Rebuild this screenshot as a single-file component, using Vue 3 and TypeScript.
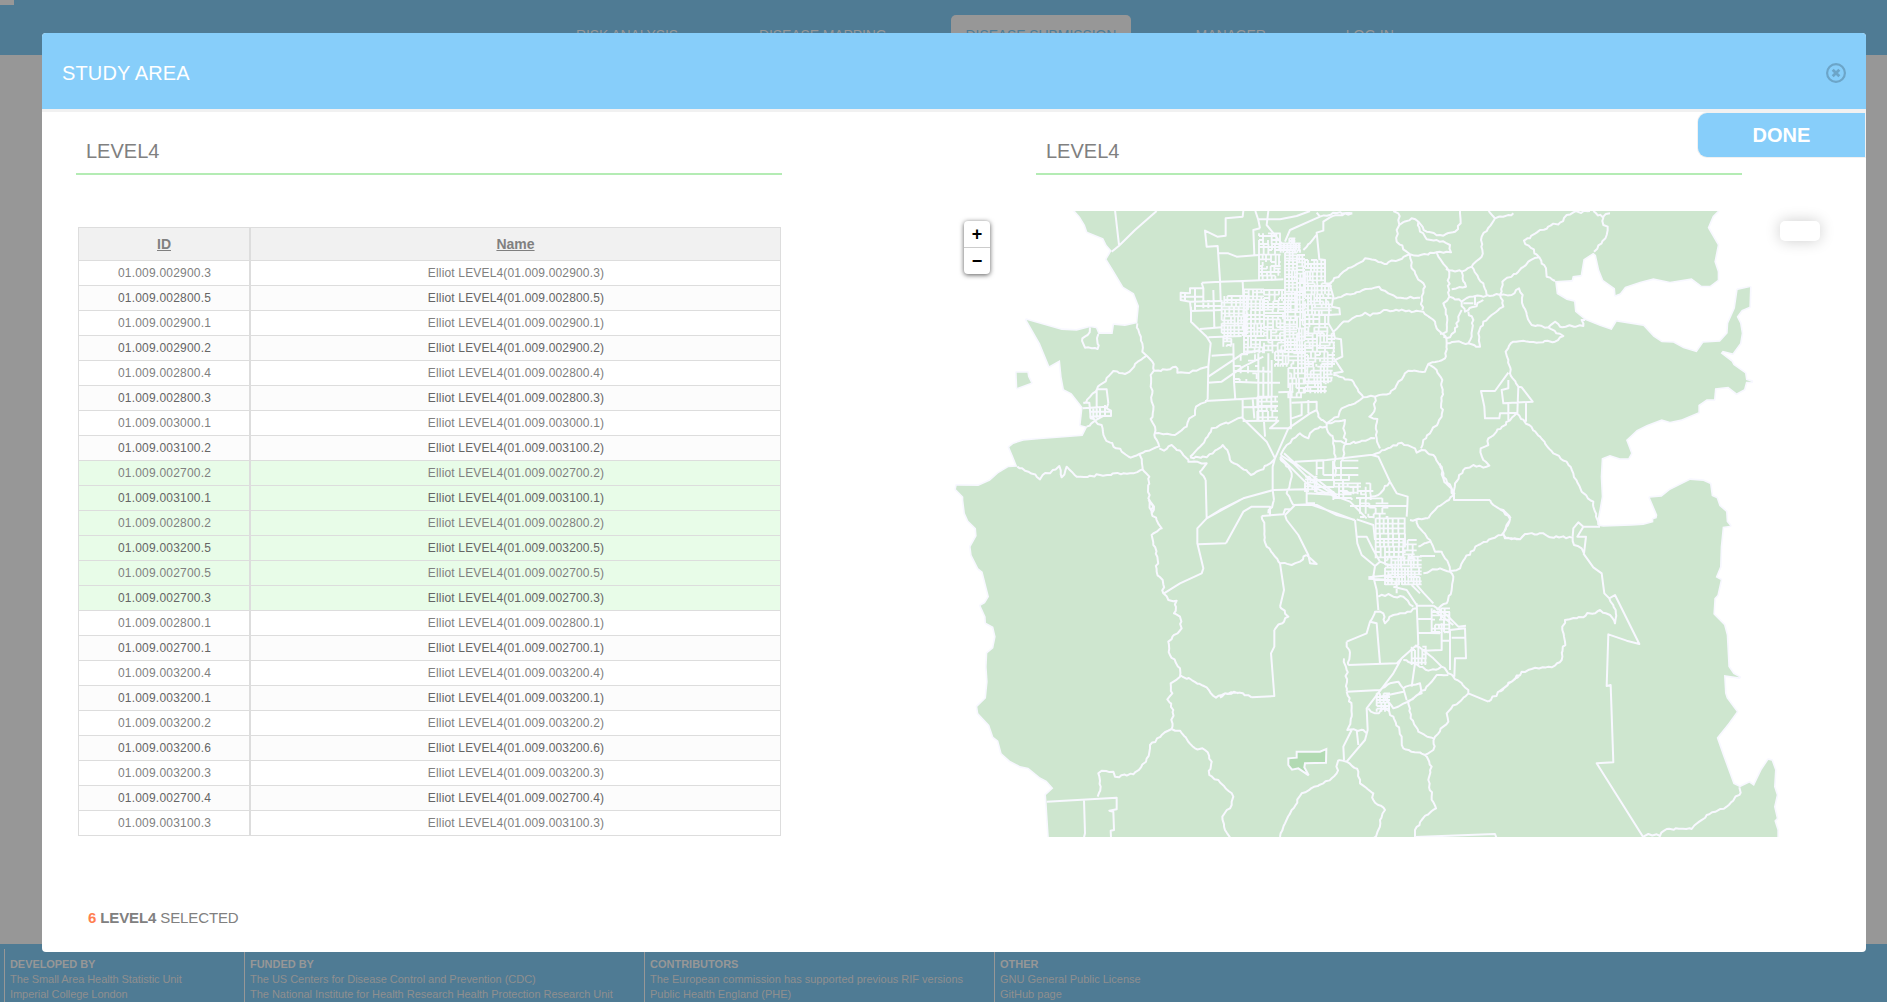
<script setup lang="ts">
interface Tab { label: string; active?: boolean; gap: number }

const tabs: Tab[] = [
  { label: 'RISK ANALYSIS', gap: 0 },
  { label: 'DISEASE MAPPING', gap: 51 },
  { label: 'DISEASE SUBMISSION', gap: 49, active: true },
  { label: 'MANAGER', gap: 50 },
  { label: 'LOG IN', gap: 50 },
]

const ids = [
  '002900.3', '002800.5', '002900.1', '002900.2', '002800.4', '002800.3', '003000.1', '003100.2',
  '002700.2', '003100.1', '002800.2', '003200.5', '002700.5', '002700.3', '002800.1', '002700.1',
  '003200.4', '003200.1', '003200.2', '003200.6', '003200.3', '002700.4', '003100.3',
]
const rows = ids.map((id, i) => ({
  id: `01.009.${id}`,
  name: `Elliot LEVEL4(01.009.${id})`,
  selected: i >= 8 && i <= 13,
}))

const credits = [
  { title: 'DEVELOPED BY', lines: ['The Small Area Health Statistic Unit', 'Imperial College London'] },
  { title: 'FUNDED BY', lines: ['The US Centers for Disease Control and Prevention (CDC)', 'The National Institute for Health Research Health Protection Research Unit'] },
  { title: 'CONTRIBUTORS', lines: ['The European commission has supported previous RIF versions', 'Public Health England (PHE)'] },
  { title: 'OTHER', lines: ['GNU General Public License', 'GitHub page'] },
]

type Pt = [number, number]

// Reproducible noise so the borders are the same at each load.
let seed = 7
function rnd(): number {
  seed = (seed * 16807) % 2147483647
  return seed / 2147483647
}

function points(dx: number, dy: number, text: string): Pt[] {
  return text.trim().split(/\s+/).map((p) => {
    const [x, y] = p.split(',').map(Number)
    return [x + dx, y + dy] as Pt
  })
}

function roughen(list: Pt[], amount: number): Pt[] {
  const out: Pt[] = [list[0]]
  for (let i = 1; i < list.length; i++) {
    const [x0, y0] = list[i - 1]
    const [x1, y1] = list[i]
    const n = Math.floor(Math.hypot(x1 - x0, y1 - y0) / 9)
    for (let k = 1; k < n; k++) {
      out.push([
        x0 + ((x1 - x0) * k) / n + (rnd() - 0.5) * amount,
        y0 + ((y1 - y0) * k) / n + (rnd() - 0.5) * amount,
      ])
    }
    out.push([x1, y1])
  }
  return out
}

function toPath(list: Pt[]): string {
  return 'M' + list.map(([x, y]) => `${x.toFixed(1)} ${y.toFixed(1)}`).join('L')
}

// Lines are separated by "|"; a leading "=" marks a surveyed, straight border.
function borders(dx: number, dy: number, text: string): string {
  return text.split('|').map((s) => {
    const t = s.trim()
    return t.startsWith('=')
      ? toPath(points(dx, dy, t.slice(1)))
      : toPath(roughen(points(dx, dy, t), 7))
  }).join('')
}

function ticks(from: number, to: number, step: number): number[] {
  const out: number[] = []
  for (let v = from; v < to - 1; v += step * (0.7 + rnd() * 0.6)) out.push(Math.round(v))
  out.push(to)
  return out
}

// City blocks: an uneven street net with some of its edges left out.
function blocks(x0: number, y0: number, x1: number, y1: number, sx: number, sy: number, density: number): string {
  const ys = ticks(y0, y1, sy)
  let d = ''
  for (let j = 0; j < ys.length - 1; j += 3) {
    const xs = ticks(x0, x1, sx)
    for (let k = j; k < Math.min(j + 3, ys.length - 1); k++) {
      for (let i = 0; i < xs.length - 1; i++) {
        if (rnd() < density) d += `M${xs[i]} ${ys[k]}H${xs[i + 1]}`
        if (rnd() < density) d += `M${xs[i]} ${ys[k]}V${ys[k + 1]}`
      }
    }
  }
  return d
}

const outline = toPath([
  ...points(0, 0, `405,33 420,50 435,75 442,95 490,115 500,135 515,152 500,178 520,210 550,260 582,280 597,318 592,370
    555,378 522,375 518,402 475,402 468,385 450,382 410,392 365,390 260,360 300,430 328,498 360,480 365,530 372,568
    395,580 428,622 422,675 442,680 428,708 380,712 300,718 250,722 220,732 208,742 220,770 232,800 205,802 175,820
    150,842 115,858 50,857 48,868 70,890`),
  ...points(0, 900, `70,0 75,40 85,62 108,85 110,108 92,140 95,165 115,205 128,215 147,290 135,310 122,317 137,350
    138,368 160,380 167,410 160,445 142,460 140,500 143,545 138,595 112,620 115,640 148,675 160,710 175,722 185,760
    210,782 240,798 265,803 300,832 320,842 340,865 318,885 320,910 327,1020`),
  ...points(1680, 810, `832,1110 832,1080 823,1052 830,1045 822,1010 830,975 822,950 825,900 815,872 805,870 785,900
    768,935 762,948 748,938 720,952 700,942 670,860 650,803 685,760 710,725 680,685 675,670 672,615 718,622 700,612
    685,590 680,495 672,465 640,433 643,385 652,375 662,330 647,322 660,290 662,230 668,170 690,167 680,155 678,125
    658,108 650,85 635,78 630,42 610,33 570,30 540,45 510,60 485,80 450,83 472,135 470,145 460,148 460,157 430,165
    395,167 310,170 295,168 292,150 298,120 305,80`),
  ...points(1500, 0, `482,830 485,775 510,765 540,775 565,775 573,760 558,720 590,690 620,675 665,658 690,665 725,658
    775,637 775,615 800,598 822,598 825,565 865,560 890,580 912,568 918,545 935,545 918,540 915,520 880,495 875,485
    842,460 848,452 878,460 900,430 905,400 900,370 890,350 905,330 928,320 930,262 893,270 885,325 865,370 863,400
    840,425 790,428 770,457 730,445 700,428 665,427 640,410 610,378 530,365 515,390 480,378 435,360 405,335 402,305
    380,300 350,282 345,243 395,240 398,228 422,225 430,178 460,158 468,165 478,210 490,240 525,265 527,285 540,280
    555,260 600,245 640,235 690,245 755,235 785,257 810,257 833,240 833,215 823,185 833,135 803,83 818,48 833,33 838,25`),
  ...points(0, 0, '400,25'),
]) + 'Z'

const island = toPath(points(0, 0, '230,518 262,518 264,530 273,548 232,563')) + 'Z'
const picked = toPath(points(840, 690, '230,965 300,965 319,957 318,998 255,1000 253,1012 266,1036 235,1015 216,1019 205,1005 205,985 230,983')) + 'Z'

const regionBorders = [
  borders(0, 0, `=525,30 537,135|=650,33 585,90 537,137 515,155
    |592,370 598,400 607,430 607,455 620,467 637,485 642,512 632,525 632,560 637,580 635,605 640,630 632,657 645,680 643,705 655,730 658,742
    |642,512 690,508 707,500 712,518 735,518 770,512 803,500
    |620,467 605,478 585,492 575,508 555,522 520,513 470,570 430,610
    |=430,608 448,608 452,655 465,658|=470,568 500,568 505,610|=470,568 470,655|=428,625 500,620|=505,610 500,625 513,632 513,648 490,648 465,662
    |=480,620 480,650|=495,615 495,645|=448,635 513,635|=460,620 460,655|=448,650 490,648
    |450,382 443,405 427,415 435,443 473,447 475,402
    |440,680 465,662 485,675 495,715 545,755 572,773 598,762 655,740
    |658,745 672,752 695,735 745,778
    |645,700 670,703 705,705 740,680 748,655 765,645 768,620 803,598
    |=803,598 805,500 812,430 800,410 753,365 753,320
    |598,762 608,808 628,830 625,895 640,920 635,940 627,900
    |232,800 265,815 300,838 308,825 330,820 358,798 365,832 380,800 410,830 480,825 550,820 580,820 608,808
    |745,778 745,785 800,790 780,815 797,840|=797,840 800,955
    |750,772 800,772 848,735 862,750 870,780 900,800
    |750,770 785,735 815,685 840,675 875,665 908,652`),
  borders(660, 0, `=250,33 248,50 197,55 197,107 172,110 135,92 140,140 173,138 180,240 182,300
    |=173,160 205,160 230,170 297,165|=125,248 180,245 248,243 370,238
    |=125,248 130,265 90,265 90,280 62,278 62,300 90,305 93,335|=90,333 185,330|=160,270 163,382|=120,387 185,382|=145,412 245,408
    |=62,290 130,290|=75,278 75,303|=105,265 105,330|=130,265 130,325|=90,305 185,303|=105,318 185,318|=145,300 145,325|=248,243 250,290
    |=155,467 220,463|=145,530 245,463 300,450|=143,548 185,545 250,500 310,470|=135,603 245,597 335,592|=220,430 222,545 226,600
    |=248,600 248,655 320,725 345,775|=312,665 315,710|=248,663 355,662 330,685 395,685|=222,512 335,515|=222,545 300,548 360,548|=248,622 350,620
    |=295,460 295,660|=310,500 310,590|=325,460 325,590|=335,480 335,590|=278,595 283,655
    |240,800 273,825 310,808 345,775|=345,775 385,685 450,640 470,630 470,605 395,608|=390,550 393,685|=395,655 425,645 425,610|=355,577 400,575|=445,600 445,640
    |=286,33 295,60 300,85|=325,33 320,75 365,130|=295,58 360,58 410,48 450,33|=375,125 390,90 480,50 470,38
    |480,50 520,38 577,40|510,52 577,40|=510,52 490,65 490,92 470,98 478,178 495,180 495,250|470,105 430,150|=300,85 280,90 283,165
    |510,250 550,215 615,175 680,192 750,163 775,167 830,157|515,297 600,275 657,260 685,280 710,293 780,293
    |520,395 545,370 615,338 630,347 680,330 790,335 825,365 830,385 858,410
    |750,163 755,205 795,260 785,290 787,330|700,33 715,40 718,75 710,90 710,125 740,155 750,163
    |718,75 755,55 775,65 800,95 850,107 885,95 902,70 900,33|775,65 780,95 800,118 830,120 870,135 873,157 830,157 835,170 865,210
    |858,410 860,430 855,475 805,492 795,515 745,512 715,545 690,580 645,590 610,592 575,540 520,525
    |805,492 830,510 847,540 845,650 810,700 790,720 783,745|645,590 645,625 628,650 652,657 650,715 660,745
    |610,592 600,600 545,625 535,650 500,670 475,650 470,630|500,670 555,660 550,685 557,730 548,780
    |500,680 480,680 450,700 445,715 420,700 380,735 362,765|500,670 500,685 520,720 525,780 525,830|520,720 560,732 645,715
    |=405,785 500,780 630,765|630,765 725,728 765,745 770,758 785,750 820,765 845,800 850,835 882,885
    |=635,765 655,770 690,845 710,880 743,890 742,918 740,950|690,845 655,885 630,890
    |=362,765 400,790 440,830 530,890 570,905 620,955|=360,770 385,795 440,850 500,880 540,895|=372,760 400,785 480,845 530,885
    |=345,775 338,800 338,870 342,900|342,900 325,940|=140,955 180,930 250,895 340,870 440,868 440,880 530,885
    |=520,395 525,415 543,418 547,470 525,480 548,515 520,520|=515,320 538,325 540,343 505,345|=495,250 510,255 520,290 515,320|=520,395 505,370 505,345
    |360,775 375,790 395,820 390,850 380,880 400,915|=400,915 450,913 530,940 582,960|=440,868 440,910 465,910|=570,918 740,918
    |882,885 860,903 825,930 805,955`),
  borders(1500, 0, `145,30 165,55 220,40|165,55 125,110 125,170 95,200 65,215 20,208 25,210
    |95,200 130,250 140,285 180,285 190,320 155,345 130,365 115,400 120,440 85,430 45,425 18,430
    |25,210 28,290 65,305 90,290 140,287|65,215 78,260 35,268|28,290 10,310 22,360 20,395 0,402|65,330 55,350 45,395 30,412 10,410|85,335 100,360 95,410 85,430
    |65,305 75,335 130,300|=70,310 100,310|=105,290 105,315|180,285 185,275 187,245 235,215 265,185 298,172 318,205 320,230 345,243
    |298,172 252,122 300,90 360,68 380,45 400,37 450,33|460,33 490,53 490,75 503,80 500,105 485,130 462,155|490,50 510,40
    |180,285 215,285 237,265 248,285 250,320 275,375 325,382 370,408 345,425 220,425 197,455 205,480 210,520 235,560
    |325,382 345,365 360,380 430,378 425,360 435,360
    |=205,518 165,573 123,573 133,620 135,655 178,655 180,640 230,638|=205,540 205,565 185,570 190,610 278,605 245,562 235,560 232,640|=258,610 258,665|=205,612 205,660
    |230,640 145,715 145,735 122,745 130,780 148,797 130,803 100,795 75,805 45,850 42,882|230,640 300,710 340,760 380,785 400,820 425,875 460,905 468,950 475,975
    |=42,882 42,900 150,900|150,900 160,915 190,930 212,955|45,882 10,830 0,790`),
  borders(0, 900, `625,0 642,20 635,40 665,85 635,105 640,135 652,170 650,215 668,240 670,280 685,300 710,302 702,340 720,350 725,385 685,425 690,465 720,505 720,530 692,550 697,580 682,598 700,630 695,687
    |=672,280 720,250 785,220 790,205 772,130 772,85 800,55|=800,55 900,0|=775,133 858,130
    |720,525 800,562 828,593 855,580 900,577|695,687 665,705 630,735 618,785 580,823 525,830 520,815 485,812 475,820 482,860 473,890
    |695,687 720,692 765,745 795,750 815,785 808,825 835,840 880,890 875,915 847,950 855,990 870,1012|=320,905 530,893 530,928 508,932 520,935 522,990 512,992 513,1012|=432,900 435,1000 432,1012`),
  borders(840, 690, `=18,340 70,245 95,230 150,230 150,257|=125,258 190,253 195,238 212,238|=195,255 225,225 290,225 350,255 405,270
    |125,258 133,290 133,330 140,350 180,400|180,400 215,405 240,395 260,375|=260,375 290,402 270,400 265,375 235,315 200,270 195,255
    |=180,400 192,480 180,530|180,530 205,560 163,600|=163,600 163,650 153,670 163,798 95,802|95,802 60,788 15,790 0,803
    |=405,270 412,340 425,375 465,408 460,440 470,480 475,540|=410,320 440,320 460,360 480,395 520,410|=410,268 460,285 465,330
    |=445,442 515,435|=445,446 520,450|=480,395 465,408|475,500 505,492 520,500 550,500 580,530
    |450,575 465,545 490,550 495,580 520,555 555,550 590,535|=380,635 440,610 450,575 470,580 480,700
    |380,635 380,650 388,660 385,705|=385,705 530,700 550,680|372,685 380,720 380,785|=380,785 480,780|380,785 395,830 395,860 382,900 430,900 440,910
    |=590,645 545,685 520,730 440,835 443,900 435,930 380,995|=590,520 595,645|=590,527 640,527|=595,567 635,567|=595,608 660,610|=665,580 665,660 610,662|=665,632 690,632|=690,600 690,720
    |=640,527 680,555 715,590 738,587|=690,600 735,595 738,685 705,685 703,740|=695,623 735,623|=640,540 700,585
    |550,690 585,700 625,722 665,710 700,740 745,780 745,790|=590,645 640,685 665,710|=745,790 805,815|805,815 850,775 875,755 900,735
    |685,735 650,735 615,780 565,815 520,835 495,800|=585,700 575,770|480,780 510,760 535,755 550,775 600,760 605,790 560,815|=550,775 560,810|=480,800 550,785
    |745,790 680,850 685,875 645,920 640,960 615,975 550,955 545,920 520,860 490,830|565,815 572,865 595,905 640,925|445,835 465,850 500,835
    |=395,900 370,950 372,990|=410,900 415,945|355,990 350,1030 310,1060 245,1090 215,1140 195,1180 180,1221
    |355,990 380,995 415,1025 420,1060 460,1090 460,1110 495,1140 480,1170 475,1200 460,1225|615,975 635,1010 625,1050 635,1100 648,1135 605,1170 585,1200 585,1225|=585,1221 825,1212 830,1225
    |625,265 605,268 570,270|590,265 595,290 630,330 645,365 665,365 685,400 690,425 700,440 695,480 680,520 650,540|690,422 720,415 735,385 775,345 845,315 870,270|850,315 860,325 900,328
    |595,350 630,335|=600,378 645,378|610,430 660,415 690,425|=520,470 560,480 590,525|=590,465 612,490 640,520|=530,445 530,490|=575,465 600,490`),
  borders(1680, 810, `0,118 30,147 10,190|10,190 15,205 60,208 75,192 130,190 150,202 215,203|=218,200 220,175 235,157 250,170 300,170|=250,170 232,200 258,200 252,250|252,250 245,235 222,225 218,200
    |=250,250 280,292 305,310 313,370 328,385 345,375 418,522 380,512 325,493 320,648 332,645 340,877 290,880 430,1102
    |328,385 347,420 345,460 330,435 300,420 230,445 195,450 187,480 195,515 185,570 155,592 95,597 65,605 35,635 0,665
    |430,1100 445,1092 480,1098 500,1077 575,1077 620,1035 680,1010 722,968 718,952`),
].join('')

const cityBlocks = [
  blocks(957, 100, 1022, 240, 13, 11, 0.8),
  blocks(1022, 130, 1082, 158, 8, 7, 0.95),
  blocks(1048, 115, 1066, 130, 9, 8, 0.9),
  blocks(1035, 158, 1071, 460, 11, 10, 0.94),
  blocks(1045, 460, 1095, 595, 12, 13, 0.88),
  blocks(1071, 165, 1095, 460, 8, 12, 0.92),
  blocks(1095, 180, 1155, 250, 10, 11, 0.9),
  blocks(1095, 250, 1175, 345, 10, 11, 0.88),
  blocks(1095, 345, 1165, 400, 14, 13, 0.8),
  blocks(1095, 400, 1185, 500, 12, 10, 0.86),
  blocks(1095, 500, 1178, 550, 10, 11, 0.86),
  blocks(1095, 550, 1160, 580, 11, 11, 0.85),
  blocks(845, 288, 925, 408, 11, 10, 0.9),
  blocks(850, 408, 875, 440, 10, 10, 0.95),
  blocks(912, 268, 972, 460, 11, 12, 0.9),
  blocks(972, 270, 1035, 460, 13, 11, 0.84),
  blocks(1005, 455, 1045, 500, 10, 10, 0.85),
  blocks(882, 463, 955, 545, 17, 20, 0.4),
  blocks(952, 590, 1014, 660, 14, 16, 0.85),
  blocks(1095, 830, 1132, 876, 10, 9, 0.8),
  blocks(1130, 782, 1255, 880, 24, 20, 0.68),
  blocks(1180, 850, 1300, 900, 14, 12, 0.7),
  blocks(1260, 895, 1345, 955, 16, 14, 0.5),
  blocks(1307, 955, 1397, 1075, 15, 13, 0.97),
  blocks(1335, 1070, 1445, 1155, 10, 10, 0.92),
  blocks(1390, 1020, 1430, 1080, 12, 14, 0.75),
  blocks(1475, 1225, 1530, 1300, 13, 13, 0.8),
  blocks(1415, 1340, 1460, 1395, 11, 11, 0.8),
  blocks(1310, 1480, 1350, 1535, 13, 11, 0.8),
].join('')
</script>

<template>
  <div class="page">
    <nav class="nav">
      <span class="corner"></span>
      <span v-for="t in tabs" :key="t.label" class="tab" :class="{ active: t.active }" :style="{ marginLeft: t.gap + 'px' }">{{ t.label }}</span>
    </nav>
    <main class="backdrop"></main>
    <footer class="footer">
      <section v-for="c in credits" :key="c.title" class="credit">
        <strong>{{ c.title }}</strong>
        <span v-for="l in c.lines" :key="l">{{ l }}</span>
      </section>
    </footer>

    <div class="modal">
      <header class="modal-head">
        <h1>STUDY AREA</h1>
        <svg class="close" width="20" height="20" viewBox="0 0 20 20">
          <circle cx="10" cy="10" r="8.9" />
          <path d="M6.7 6.7l6.6 6.6M13.3 6.7l-6.6 6.6" />
        </svg>
      </header>
      <button class="done">DONE</button>
      <div class="modal-body">
        <section class="left">
          <h2>LEVEL4</h2>
          <div class="table">
            <div class="row head"><span class="id"><u>ID</u></span><span class="name"><u>Name</u></span></div>
            <div v-for="r in rows" :key="r.id" class="row" :class="{ selected: r.selected }">
              <span class="id">{{ r.id }}</span><span class="name">{{ r.name }}</span>
            </div>
          </div>
          <p class="count"><b class="num">6</b> <b>LEVEL4</b> SELECTED</p>
        </section>
        <section class="right">
          <h2>LEVEL4</h2>
          <div class="map">
            <svg width="880" height="626" viewBox="30 33 2640 1878">
              <g class="land"><path :d="outline" /><path :d="island" /></g>
              <path class="picked" :d="picked" />
              <path class="lines" :d="regionBorders" />
              <path class="lines city" :d="cityBlocks" />
            </svg>
            <div class="zoom"><span>+</span><span>−</span></div>
            <div class="info"></div>
          </div>
        </section>
      </div>
    </div>
  </div>
</template>

<style>
body { margin: 0; overflow: hidden; }
</style>

<style scoped>
* { box-sizing: border-box; }
.page { position: relative; display: flex; flex-direction: column; height: 1002px; overflow: hidden; font-family: "Liberation Sans", Arial, sans-serif; background: #979797; }
.nav { position: relative; display: flex; height: 55px; padding: 15px 0 0 561px; background: #4f7b94; }
.corner { position: absolute; left: 0; top: 0; width: 14px; height: 5px; background: #979797; }
.tab { height: 40px; padding: 12px 15px 0; font-size: 14px; line-height: 16px; color: #979797; border-radius: 5px 5px 0 0; white-space: nowrap; letter-spacing: -0.1px; }
.tab:first-child { letter-spacing: 0; }
.tab:last-child { letter-spacing: 0.15px; }
.tab.active { width: 180px; background: #979797; color: #4f7b94; }
.backdrop { flex: 1; }
.footer { display: flex; height: 58px; padding: 5px 0 0 4px; background: #4f7b94; overflow: hidden; }
.credit { display: flex; flex-direction: column; height: 60px; padding: 8px 0 0 5px; border-left: 1px solid #979797; font-size: 11px; line-height: 15px; color: #8f8f8f; white-space: nowrap; letter-spacing: -0.03px; }
.credit:nth-child(1) { width: 240px; letter-spacing: -0.07px; }
.credit:nth-child(2) { width: 400px; }
.credit:nth-child(3) { width: 350px; letter-spacing: 0; }
.credit:nth-child(4) { letter-spacing: 0; }
.credit strong { color: #979797; }

.modal { position: absolute; left: 42px; top: 33px; width: 1824px; height: 919px; background: #fff; border-radius: 4px; overflow: hidden; }
.modal-head { display: flex; justify-content: space-between; align-items: center; height: 79px; padding: 0 20px; background: #87cefa; border-bottom: 3px solid #f1f1f1; }
h1, h2 { margin: 0; font-weight: normal; font-size: 20px; }
h1 { color: #fff; line-height: 24px; padding-top: 3px; letter-spacing: 0.15px; }
.close { fill: none; stroke: #6ca5c8; stroke-width: 2.2; margin-top: 4px; }
.close path { stroke-width: 2.8; }
.done { position: absolute; right: 1px; top: 80px; width: 167px; height: 44px; padding: 0; border: 0; border-radius: 9px 0 0 9px; background: #87cefa; box-shadow: 0 0 0 1px #f1f1f1; color: #fff; font: bold 20px "Liberation Sans", Arial, sans-serif; }
.modal-body { display: flex; justify-content: space-between; padding: 27px 36px 0 34px; }
h2 { width: 706px; height: 36px; padding-left: 10px; line-height: 24px; color: #808080; border-bottom: 2px solid #b4ecb4; }
.left { width: 706px; }
.table { width: 703px; margin: 52px 0 0 2px; border: 1px solid #ddd; border-bottom: 0; color: #808080; font-size: 12px; }
.row { display: flex; height: 25px; line-height: 24px; border-bottom: 1px solid #ddd; text-align: center; background: #fff; }
.row:nth-child(odd) { background: #fcfcfc; color: #656565; }
.row.head { height: 33px; line-height: 32px; background: #f1f1f1; color: #808080; font-size: 14px; font-weight: bold; }
.row.selected { background: #e8fce8; }
.id { width: 172px; border-right: 2px solid #ddd; padding-left: 1px; letter-spacing: 0.2px; }
.name { flex: 1; padding-left: 1px; letter-spacing: 0.16px; }
.head span { letter-spacing: 0; padding-left: 0; }
.count { margin: 73px 0 0 12px; font-size: 15px; line-height: 18px; color: #808080; letter-spacing: -0.12px; }
.num { color: #ff7f50; }

.right { width: 880px; }
.right h2 { margin-left: 86px; }
.map { position: relative; height: 626px; margin-top: 36px; }
.map svg { display: block; }
.land { fill: #cee6cf; stroke: #f8f8ff; stroke-width: 10; stroke-linejoin: round; paint-order: stroke; }
.picked { fill: #b2dab3; stroke: #f8f8ff; stroke-width: 6; }
.lines { fill: none; stroke: #f8f8ff; stroke-width: 6; stroke-linejoin: round; }
.city { stroke-width: 5.6; }
.zoom { position: absolute; left: 14px; top: 10px; width: 26px; border-radius: 4px; background: #fff; box-shadow: 0 1px 5px rgba(0, 0, 0, 0.65); }
.zoom span { display: block; height: 26px; line-height: 26px; text-align: center; font-size: 18px; font-weight: bold; color: #000; }
.zoom span:first-child { height: 27px; border-bottom: 1px solid #ccc; }
.info { position: absolute; left: 830px; top: 10px; width: 40px; height: 20px; border-radius: 5px; background: #fff; box-shadow: 0 0 15px rgba(0, 0, 0, 0.2); }
</style>
